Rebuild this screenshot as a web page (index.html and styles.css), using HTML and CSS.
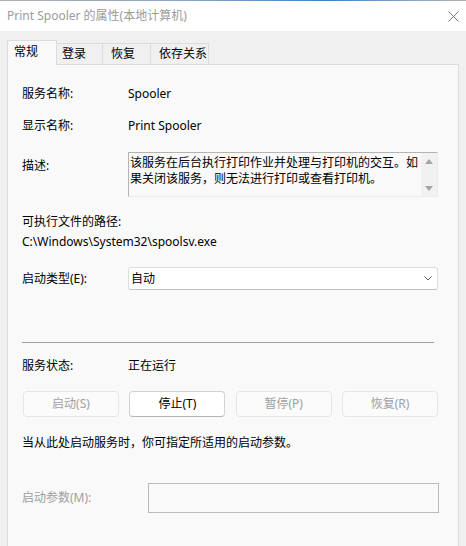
FILE: index.html
```html
<!DOCTYPE html>
<html lang="zh-CN">
<head>
<meta charset="utf-8">
<title>Print Spooler 的属性(本地计算机)</title>
<link rel="stylesheet" href="styles.css">
</head>
<body>
<div class="window">
  <div class="titlebar">
    <span class="title">Print Spooler 的属性(本地计算机)</span>
    <svg class="close" width="11" height="11" viewBox="0 0 11 11"><path d="M0.5 0.5 L10.5 10.5 M10.5 0.5 L0.5 10.5" stroke="#7a7a7a" stroke-width="1" fill="none"/></svg>
  </div>
  <div class="tabs">
    <div class="tab tab-active">常规</div>
    <div class="tab tab-login">登录</div>
    <div class="tab tab-recovery">恢复</div>
    <div class="tab tab-deps">依存关系</div>
  </div>
  <div class="panel">
    <div class="row row-name"><span class="label">服务名称:</span><span class="value">Spooler</span></div>
    <div class="row row-display"><span class="label">显示名称:</span><span class="value">Print Spooler</span></div>
    <div class="row row-desc">
      <span class="label label-desc">描述:</span>
      <div class="desc-box">
        <div class="desc-text">该服务在后台执行打印作业并处理与打印机的交互。如果关闭该服务，则无法进行打印或查看打印机。</div>
        <div class="scrollbar">
          <svg width="8" height="5" viewBox="0 0 8 5"><path d="M0 5 L4 0 L8 5 Z" fill="#a5a5a5"/></svg>
          <svg width="8" height="5" viewBox="0 0 8 5"><path d="M0 0 L8 0 L4 5 Z" fill="#a5a5a5"/></svg>
        </div>
      </div>
    </div>
    <div class="path-label">可执行文件的路径:</div>
    <div class="path-value">C:\Windows\System32\spoolsv.exe</div>
    <div class="row row-startup">
      <span class="label">启动类型(E):</span>
      <div class="combo">
        <span class="combo-text">自动</span>
        <svg class="chevron" width="8" height="5" viewBox="0 0 8 5"><path d="M0.5 0.5 L4 4 L7.5 0.5" stroke="#5a5a5a" stroke-width="1" fill="none"/></svg>
      </div>
    </div>
    <div class="separator"></div>
    <div class="row row-status"><span class="label">服务状态:</span><span class="value">正在运行</span></div>
    <div class="buttons">
      <div class="btn btn-disabled">启动(S)</div>
      <div class="btn">停止(T)</div>
      <div class="btn btn-disabled">暂停(P)</div>
      <div class="btn btn-disabled">恢复(R)</div>
    </div>
    <div class="hint">当从此处启动服务时，你可指定所适用的启动参数。</div>
    <div class="row row-param">
      <span class="label label-param">启动参数(M):</span>
      <div class="param-input"></div>
    </div>
  </div>
</div>
</body>
</html>
```
FILE: styles.css
```css
html, body {
  margin: 0;
  padding: 0;
}
body {
  width: 466px;
  height: 546px;
  overflow: hidden;
  background: #f0f0f0;
  font-family: "Noto Sans", "Noto Sans CJK SC", sans-serif;
  font-size: 12px;
  color: #000;
}
.window {
  width: 466px;
  height: 546px;
  overflow: hidden;
}
.titlebar {
  height: 31px;
  box-sizing: border-box;
  padding: 0 7px;
  display: flex;
  align-items: center;
  justify-content: space-between;
  background: linear-gradient(to right, #b0b0b0 0%, #8aa6c4 40%, #3f82c8 70%, #8ea9c6 90%, #b0b0b0 100%) top left / 100% 1px no-repeat, #ffffff;
}
.title {
  color: #9b9b9b;
  line-height: 16px;
}
.close {
  display: block;
  margin-top: 1px;
}
.tabs {
  display: flex;
  align-items: flex-end;
  height: 24px;
  margin: 9px 0 0 7px;
}
.tab {
  box-sizing: border-box;
  height: 21px;
  line-height: 20px;
  padding-left: 6px;
  border: 1px solid #dcdcdc;
  border-left: none;
  border-bottom: none;
  background: #f0f0f0;
  color: #000;
}
.tab-active {
  position: relative;
  z-index: 1;
  width: 50px;
  height: 25px;
  line-height: 22px;
  margin-bottom: -1px;
  border-left: 1px solid #dcdcdc;
  background: #f9f9f9;
}
.tab-login {
  width: 46px;
  padding-left: 5px;
}
.tab-recovery {
  width: 48px;
  padding-left: 8px;
}
.tab-deps {
  width: 58px;
  padding-left: 8px;
}
.panel {
  width: 452px;
  height: 500px;
  box-sizing: border-box;
  margin-left: 7px;
  border: 1px solid #dcdcdc;
  background: #f9f9f9;
  padding: 21px 20px 0 14px;
}
.row {
  display: flex;
  align-items: center;
  line-height: 16px;
}
.label {
  width: 106px;
  flex: none;
}
.row-display {
  margin-top: 16px;
}
.row-desc {
  margin-top: 18px;
  align-items: flex-start;
}
.label-desc {
  margin-top: 6px;
}
.desc-box {
  width: 310px;
  height: 45px;
  box-sizing: border-box;
  display: flex;
  border-top: 1px solid #b4b4b4;
  border-left: 1px solid #b4b4b4;
  border-right: 1px solid #ececec;
  border-bottom: 1px solid #ececec;
}
.desc-text {
  flex: 1;
  padding: 2px 0 0 1px;
  line-height: 16px;
}
.scrollbar {
  width: 16px;
  flex: none;
  background: #f1f1f1;
  display: flex;
  flex-direction: column;
  align-items: center;
  justify-content: space-between;
  padding: 6px 0 5px;
  box-sizing: border-box;
}
.scrollbar svg {
  display: block;
}
.path-label {
  margin-top: 17px;
  line-height: 16px;
}
.path-value {
  margin-top: 4px;
  line-height: 16px;
}
.row-startup {
  margin-top: 17px;
}
.combo {
  width: 310px;
  height: 23px;
  box-sizing: border-box;
  background: #ffffff;
  border: 1px solid #dedede;
  border-bottom-color: #c4c4c4;
  border-radius: 3px;
  display: flex;
  align-items: center;
  justify-content: space-between;
  padding: 0 5px 0 2px;
}
.chevron {
  display: block;
}
.separator {
  margin-top: 52px;
  width: 412px;
  height: 1px;
  background: #a0a0a0;
}
.row-status {
  margin-top: 15px;
}
.buttons {
  margin-top: 17px;
  padding-left: 1px;
  display: flex;
  justify-content: space-between;
}
.btn {
  width: 96px;
  height: 26px;
  box-sizing: border-box;
  border: 1px solid #d2d2d2;
  border-bottom-color: #b5b5b5;
  border-radius: 4px;
  background: #ffffff;
  display: flex;
  align-items: center;
  justify-content: center;
  line-height: 16px;
}
.btn-disabled {
  background: #fbfbfb;
  border-color: #e6e6e6;
  color: #a0a0a0;
}
.hint {
  margin-top: 18px;
  line-height: 16px;
}
.row-param {
  margin-top: 32px;
}
.label-param {
  width: 126px;
  color: #a0a0a0;
}
.param-input {
  flex: none;
  width: 291px;
  height: 30px;
  box-sizing: border-box;
  border: 1px solid #bababa;
  background: #f9f9f9;
}
```
